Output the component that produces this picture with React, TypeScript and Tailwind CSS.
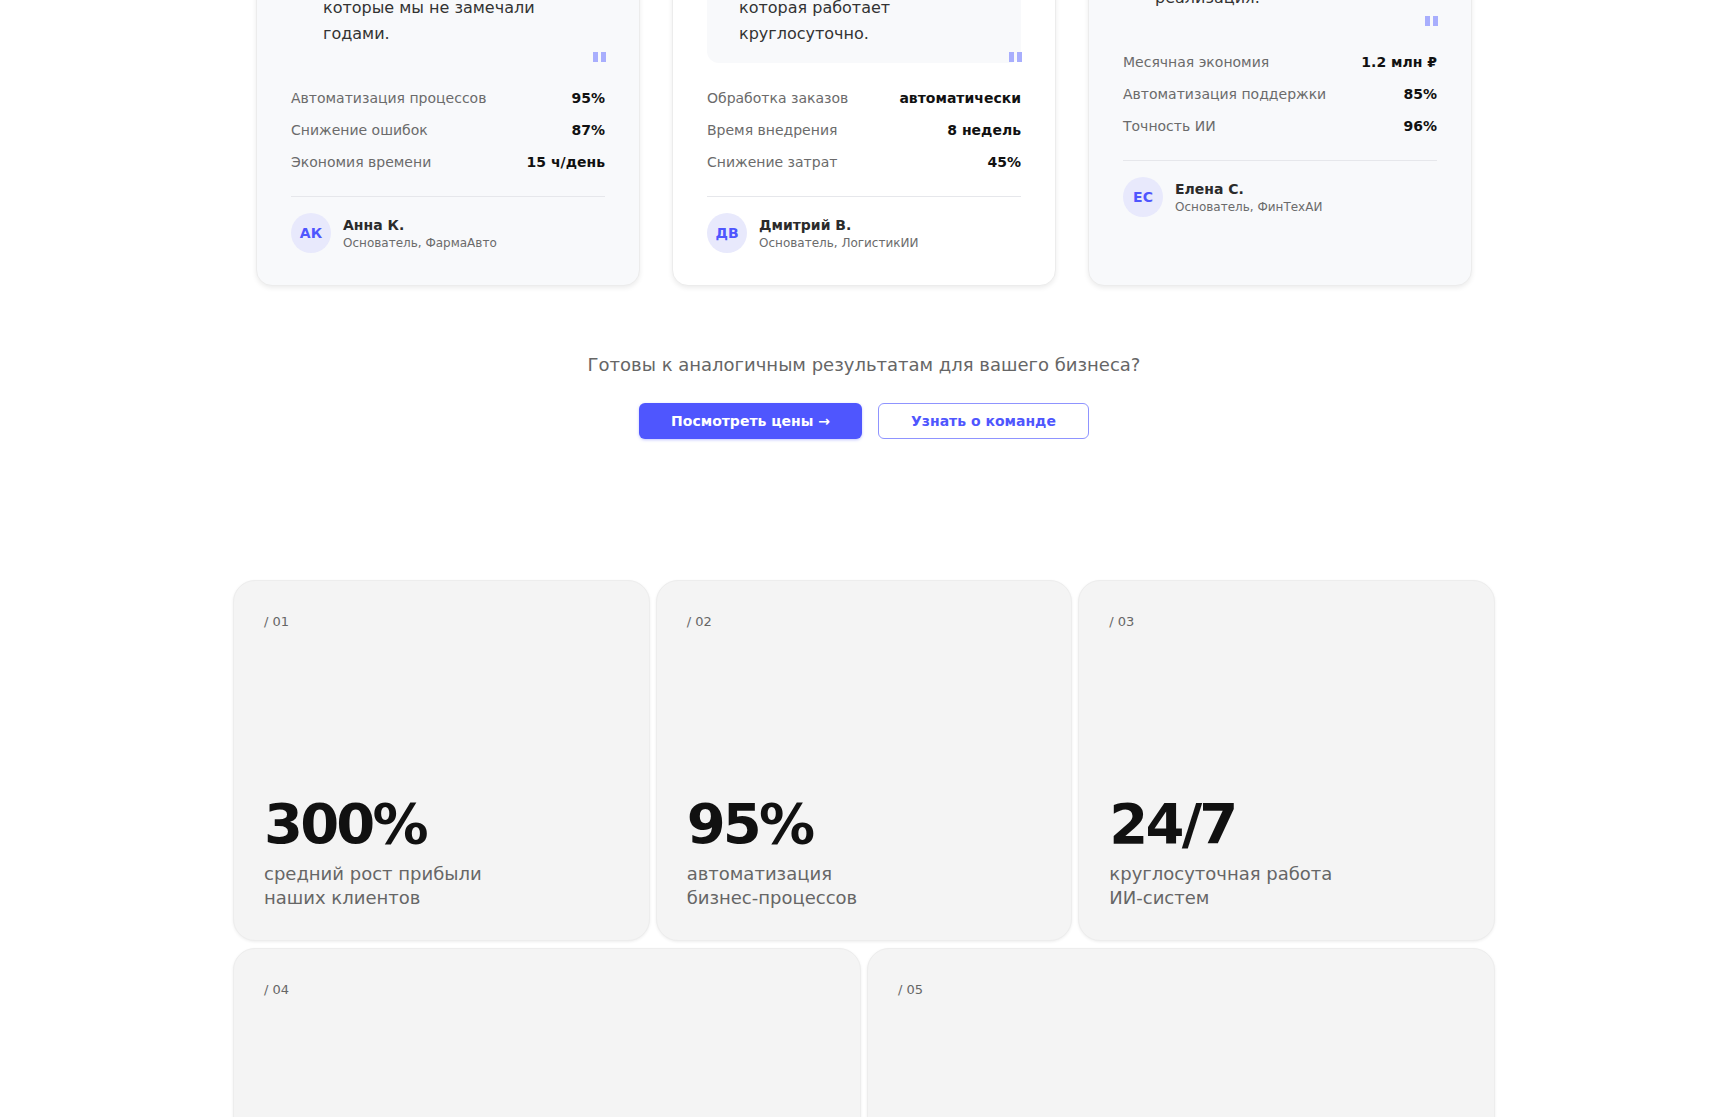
import React from "react";

type Stat = { label: string; value: string };

type Story = {
  tag: string;
  quote: string[];
  stats: Stat[];
  initials: string;
  name: string;
  role: string;
  featured?: boolean;
  shortHead?: boolean;
};

const stories: Story[] = [
  {
    tag: "Фармацевтика",
    quote: [
      "Агенты разобрали наши",
      "процессы и нашли узкие",
      "места в цепочке,",
      "которые мы не замечали",
      "годами.",
    ],
    stats: [
      { label: "Автоматизация процессов", value: "95%" },
      { label: "Снижение ошибок", value: "87%" },
      { label: "Экономия времени", value: "15 ч/день" },
    ],
    initials: "АК",
    name: "Анна К.",
    role: "Основатель, ФармаАвто",
  },
  {
    tag: "Логистика",
    quote: [
      "ИИ-ассистент взял на",
      "себя все заказы. Это",
      "новая команда,",
      "которая работает",
      "круглосуточно.",
    ],
    stats: [
      { label: "Обработка заказов", value: "автоматически" },
      { label: "Время внедрения", value: "8 недель" },
      { label: "Снижение затрат", value: "45%" },
    ],
    initials: "ДВ",
    name: "Дмитрий В.",
    role: "Основатель, ЛогистикИИ",
    featured: true,
  },
  {
    tag: "Финтех",
    quote: ["Окупаемость за два", "месяца и быстрая", "реализация."],
    stats: [
      { label: "Месячная экономия", value: "1.2 млн ₽" },
      { label: "Автоматизация поддержки", value: "85%" },
      { label: "Точность ИИ", value: "96%" },
    ],
    initials: "ЕС",
    name: "Елена С.",
    role: "Основатель, ФинТехАИ",
    shortHead: true,
  },
];

const numbers = [
  { id: "01", value: "300%", lines: ["средний рост прибыли", "наших клиентов"], span: "col-span-2" },
  { id: "02", value: "95%", lines: ["автоматизация", "бизнес-процессов"], span: "col-span-2" },
  { id: "03", value: "24/7", lines: ["круглосуточная работа", "ИИ-систем"], span: "col-span-2" },
  { id: "04", value: "", lines: [], span: "col-span-3" },
  { id: "05", value: "", lines: [], span: "col-span-3" },
];

function StoryCard({ story }: { story: Story }) {
  return (
    <div
      className={
        story.featured
          ? "flex flex-col rounded-2xl border border-[#ececec] bg-white px-[34px] pt-[34px] pb-[32px] shadow-[0_2px_5px_rgba(0,0,0,0.08)]"
          : "flex flex-col rounded-2xl border border-[#ececec] bg-[#f8f9fb] px-[34px] pt-[34px] pb-[32px] shadow-[0_2px_5px_rgba(0,0,0,0.08)]"
      }
    >
      <p className="mb-6 text-xs leading-4 uppercase tracking-wider text-[#4f56fe]">{story.tag}</p>

      <div
        className={
          story.shortHead
            ? "relative mt-4 rounded-xl bg-[#f8f9fb] px-8 py-4 text-base leading-[26px] text-[#333]"
            : "relative rounded-xl bg-[#f8f9fb] px-8 py-4 text-base leading-[26px] text-[#333]"
        }
      >
        {story.quote.map((line, i) => (
          <React.Fragment key={i}>
            {line}
            {i < story.quote.length - 1 && <br />}
          </React.Fragment>
        ))}
        <span className="absolute right-[-1px] bottom-[1px] flex gap-[3px]">
          <span className="h-[10px] w-[5px] bg-[#a8aefd]" />
          <span className="h-[10px] w-[5px] bg-[#a8aefd]" />
        </span>
      </div>

      <div className="mt-[25px] flex flex-col gap-3">
        {story.stats.map((s) => (
          <div key={s.label} className="flex items-center justify-between text-sm leading-5">
            <span className="text-[#6b6b6b]">{s.label}</span>
            <span className="font-bold text-[#111]">{s.value}</span>
          </div>
        ))}
      </div>

      <div className="mt-6 flex items-center gap-3 border-t border-[#e6e7eb] pt-4">
        <div className="flex h-10 w-10 items-center justify-center rounded-full bg-[#e8e9fc] text-sm font-bold text-[#4f56fe]">
          {story.initials}
        </div>
        <div>
          <p className="text-sm leading-5 font-bold text-[#2b2b2b]">{story.name}</p>
          <p className="text-xs leading-4 text-[#6b6b6b]">{story.role}</p>
        </div>
      </div>
    </div>
  );
}

export default function App() {
  return (
    <div className="min-h-screen overflow-hidden bg-white font-['DejaVu_Sans',sans-serif]">
      <section className="mx-auto max-w-[1216px]">
        <div className="-mt-[174px] grid grid-cols-3 gap-8">
          {stories.map((s) => (
            <StoryCard key={s.name} story={s} />
          ))}
        </div>

        <p className="mt-[65px] text-center text-lg leading-7 text-[#666]">
          Готовы к аналогичным результатам для вашего бизнеса?
        </p>

        <div className="mt-6 flex items-start justify-center gap-4">
          <button className="h-9 rounded-md bg-[#4f56fe] px-8 text-sm leading-5 font-bold text-white shadow-[0_1px_3px_rgba(79,86,254,0.35)]">
            Посмотреть цены →
          </button>
          <button className="h-9 rounded-md border border-[#8f94ff] bg-white px-8 text-sm leading-5 font-bold text-[#4f56fe]">
            Узнать о команде
          </button>
        </div>
      </section>

      <section className="mx-auto mt-[141px] grid max-w-[1262px] grid-cols-6 gap-x-[6px] gap-y-[7px]">
        {numbers.map((n) => (
          <div
            key={n.id}
            className={`${n.span} flex h-[361px] flex-col rounded-[22px] border border-[#ededed] bg-[#f4f4f4] px-[30px] pt-[31px] pb-[30px] shadow-[0_1px_3px_rgba(0,0,0,0.07)]`}
          >
            <p className="text-[13px] leading-5 text-[#666]">/ {n.id}</p>
            {n.value && (
              <div className="mt-auto">
                <p className="text-[56px] leading-none font-bold tracking-[-0.05em] text-[#111]">{n.value}</p>
                <p className="mt-[10px] text-lg leading-6 whitespace-nowrap text-[#666]">
                  {n.lines[0]}
                  <br />
                  {n.lines[1]}
                </p>
              </div>
            )}
          </div>
        ))}
      </section>
    </div>
  );
}
